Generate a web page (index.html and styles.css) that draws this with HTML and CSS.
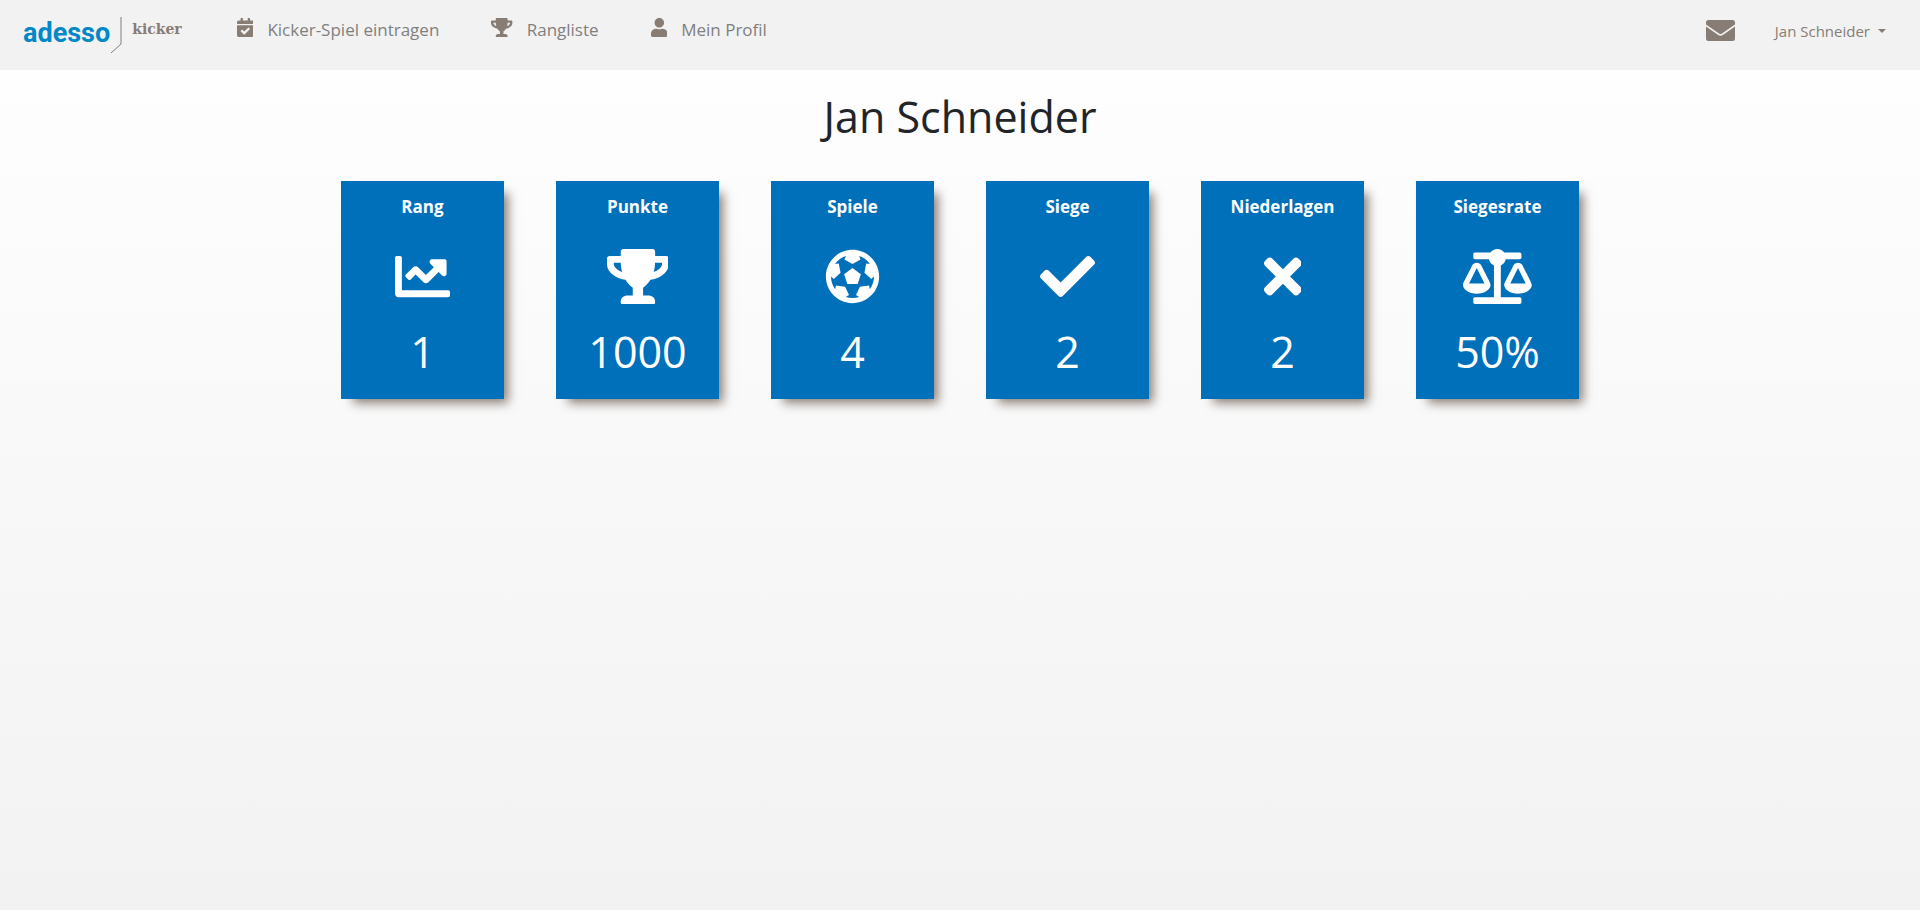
FILE: index.html
```html
<!DOCTYPE html>
<html lang="de">
<head>
<meta charset="utf-8">
<title>adesso kicker – Mein Profil</title>
<link rel="stylesheet" href="styles.css">
</head>
<body>
<header class="navbar">
  <a class="brand" href="#">
    <span class="brand-name">adesso</span>
    <svg class="brand-rule" viewBox="0 0 12 38" aria-hidden="true"><path d="M11 1V28L1 37"/></svg>
    <span class="brand-product">kicker</span>
  </a>
  <nav class="nav-links">
    <a class="nav-link" href="#">
      <svg class="nav-icon" viewBox="0 0 448 512" aria-hidden="true"><path d="M436 160H12c-6.627 0-12-5.373-12-12v-36c0-26.51 21.49-48 48-48h48V12c0-6.627 5.373-12 12-12h40c6.627 0 12 5.373 12 12v52h128V12c0-6.627 5.373-12 12-12h40c6.627 0 12 5.373 12 12v52h48c26.51 0 48 21.49 48 48v36c0 6.627-5.373 12-12 12zM12 192h424c6.627 0 12 5.373 12 12v260c0 26.51-21.49 48-48 48H48c-26.51 0-48-21.49-48-48V204c0-6.627 5.373-12 12-12zm333.296 95.947l-28.169-28.398c-4.667-4.705-12.265-4.736-16.97-.068L194.12 364.665l-45.98-46.352c-4.667-4.705-12.266-4.736-16.971-.068l-28.397 28.17c-4.705 4.667-4.736 12.265-.068 16.97l82.601 83.269c4.667 4.705 12.265 4.736 16.97.068l142.953-141.805c4.705-4.667 4.736-12.265.068-16.97z"/></svg>
      <span>Kicker-Spiel eintragen</span>
    </a>
    <a class="nav-link" href="#">
      <svg class="nav-icon" viewBox="0 0 576 512" aria-hidden="true"><path d="M552 64H448V24c0-13.3-10.7-24-24-24H152c-13.3 0-24 10.7-24 24v40H24C10.7 64 0 74.7 0 88v56c0 35.7 22.5 72.4 61.9 100.7 31.5 22.7 69.8 37.1 110 41.7C203.3 338.5 240 360 240 360v72h-48c-35.3 0-64 20.7-64 56v12c0 6.6 5.4 12 12 12h296c6.6 0 12-5.4 12-12v-12c0-35.3-28.7-56-64-56h-48v-72s36.7-21.5 68.1-73.6c40.3-4.6 78.6-19 110-41.7 39.3-28.3 61.9-65 61.9-100.7V88c0-13.3-10.7-24-24-24zM99.3 192.8C74.9 175.2 64 155.6 64 144v-16h64.2c1 32.6 5.8 61.2 12.8 86.2-15.1-5.2-29.2-12.4-41.7-21.4zM512 144c0 16.1-17.7 36.1-35.3 48.8-12.5 9-26.7 16.2-41.8 21.4 7-25 11.8-53.6 12.8-86.2H512v16z"/></svg>
      <span>Rangliste</span>
    </a>
    <a class="nav-link" href="#">
      <svg class="nav-icon" viewBox="0 0 448 512" aria-hidden="true"><path d="M224 256c70.7 0 128-57.3 128-128S294.7 0 224 0 96 57.3 96 128s57.3 128 128 128zm89.6 32h-16.7c-22.2 10.2-46.9 16-72.9 16s-50.6-5.8-72.9-16h-16.7C60.2 288 0 348.2 0 422.4V464c0 26.5 21.5 48 48 48h352c26.5 0 48-21.5 48-48v-41.6c0-74.2-60.2-134.4-134.4-134.4z"/></svg>
      <span>Mein Profil</span>
    </a>
  </nav>
  <div class="nav-account">
    <button class="mail-button" type="button" aria-label="Nachrichten">
      <svg class="mail-icon" viewBox="0 0 29 21" aria-hidden="true"><path d="M2.5 0h24A2.5 2.5 0 0 1 29 2.5V4.5L16 13.6Q14.5 14.6 13 13.6L0 4.5V2.5A2.5 2.5 0 0 1 2.5 0zM0 6.4L12.2 15Q14.5 16.6 16.8 15L29 6.4V18.5A2.5 2.5 0 0 1 26.5 21h-24A2.5 2.5 0 0 1 0 18.5z"/></svg>
    </button>
    <button class="user-button" type="button">Jan Schneider<span class="caret"></span></button>
  </div>
</header>
<main class="profile">
  <h1 class="profile-name">Jan Schneider</h1>
  <div class="stats">
    <section class="stat-card">
      <h2 class="stat-title">Rang</h2>
      <svg class="stat-icon" viewBox="0 0 512 512" aria-hidden="true"><path d="M496 384H64V80c0-8.84-7.16-16-16-16H16C7.16 64 0 71.16 0 80v336c0 17.67 14.33 32 32 32h464c8.84 0 16-7.16 16-16v-32c0-8.84-7.16-16-16-16zM464 96H345.94c-21.38 0-32.09 25.85-16.97 40.97l32.4 32.4L288 242.75l-73.37-73.37c-12.5-12.5-32.76-12.5-45.25 0l-68.69 68.69c-6.25 6.25-6.25 16.38 0 22.63l22.62 22.62c6.25 6.25 16.38 6.25 22.63 0L192 237.25l73.37 73.37c12.5 12.5 32.76 12.5 45.25 0l96-96 32.4 32.4c15.12 15.12 40.97 4.41 40.97-16.97V112c.01-8.84-7.15-16-15.99-16z"/></svg>
      <p class="stat-value">1</p>
    </section>
    <section class="stat-card">
      <h2 class="stat-title">Punkte</h2>
      <svg class="stat-icon" viewBox="0 0 576 512" aria-hidden="true"><path d="M552 64H448V24c0-13.3-10.7-24-24-24H152c-13.3 0-24 10.7-24 24v40H24C10.7 64 0 74.7 0 88v56c0 35.7 22.5 72.4 61.9 100.7 31.5 22.7 69.8 37.1 110 41.7C203.3 338.5 240 360 240 360v72h-48c-35.3 0-64 20.7-64 56v12c0 6.6 5.4 12 12 12h296c6.6 0 12-5.4 12-12v-12c0-35.3-28.7-56-64-56h-48v-72s36.7-21.5 68.1-73.6c40.3-4.6 78.6-19 110-41.7 39.3-28.3 61.9-65 61.9-100.7V88c0-13.3-10.7-24-24-24zM99.3 192.8C74.9 175.2 64 155.6 64 144v-16h64.2c1 32.6 5.8 61.2 12.8 86.2-15.1-5.2-29.2-12.4-41.7-21.4zM512 144c0 16.1-17.7 36.1-35.3 48.8-12.5 9-26.7 16.2-41.8 21.4 7-25 11.8-53.6 12.8-86.2H512v16z"/></svg>
      <p class="stat-value">1000</p>
    </section>
    <section class="stat-card">
      <h2 class="stat-title">Spiele</h2>
      <svg class="stat-icon" viewBox="0 0 512 512" aria-hidden="true"><path d="M504 256c0 136.967-111.033 248-248 248S8 392.967 8 256 119.033 8 256 8s248 111.033 248 248zm-48 0l-.003-.282-26.064 22.741-62.679-58.5 16.454-84.355 34.303 3.072c-24.889-34.216-60.004-60.089-100.709-73.141l13.651 31.939L256 139l-74.953-41.525 13.651-31.939c-40.631 13.028-75.78 38.87-100.709 73.141l34.565-3.073 16.192 84.355-62.678 58.5-26.064-22.741-.003.282c0 43.015 13.497 83.952 38.472 117.991l7.704-33.897 85.138 10.447 36.301 77.826-29.902 17.786c40.202 13.122 84.29 13.148 124.572 0l-29.902-17.786 36.301-77.826 85.138-10.447 7.704 33.897C442.503 339.952 456 299.015 456 256zm-248.102 69.571l-29.894-91.312L256 177.732l77.996 56.527-29.622 91.312h-96.476z"/></svg>
      <p class="stat-value">4</p>
    </section>
    <section class="stat-card">
      <h2 class="stat-title">Siege</h2>
      <svg class="stat-icon" viewBox="0 0 512 512" aria-hidden="true"><path d="M173.898 439.404l-166.4-166.4c-9.997-9.997-9.997-26.206 0-36.204l36.203-36.204c9.997-9.998 26.207-9.998 36.204 0L192 312.69 432.095 72.596c9.997-9.997 26.207-9.997 36.204 0l36.203 36.204c9.997 9.997 9.997 26.206 0 36.204l-294.4 294.401c-9.998 9.997-26.207 9.997-36.204-.001z"/></svg>
      <p class="stat-value">2</p>
    </section>
    <section class="stat-card">
      <h2 class="stat-title">Niederlagen</h2>
      <svg class="stat-icon" viewBox="0 0 352 512" aria-hidden="true"><path d="M242.72 256l100.07-100.07c12.28-12.28 12.28-32.19 0-44.48l-22.24-22.24c-12.28-12.28-32.19-12.28-44.48 0L176 189.28 75.93 89.21c-12.28-12.28-32.19-12.28-44.48 0L9.21 111.45c-12.28 12.28-12.28 32.19 0 44.48L109.28 256 9.21 356.07c-12.28 12.28-12.28 32.19 0 44.48l22.24 22.24c12.28 12.28 32.2 12.28 44.48 0L176 322.72l100.07 100.07c12.28 12.28 32.2 12.28 44.48 0l22.24-22.24c12.28-12.28 12.28-32.19 0-44.48L242.72 256z"/></svg>
      <p class="stat-value">2</p>
    </section>
    <section class="stat-card">
      <h2 class="stat-title">Siegesrate</h2>
      <svg class="stat-icon" viewBox="0 0 640 512" aria-hidden="true"><path d="M256 336h-.02c0-16.18 1.34-8.73-85.05-181.51-17.65-35.29-68.19-35.36-85.87 0C-2.06 328.75.02 320.33.02 336H0c0 44.18 57.31 80 128 80s128-35.82 128-80zM128 176l72 144H56l72-144zm511.98 160c0-16.18 1.34-8.73-85.05-181.51-17.65-35.29-68.19-35.36-85.87 0-87.12 174.26-85.04 165.84-85.04 181.51H384c0 44.18 57.31 80 128 80s128-35.82 128-80h-.02zM440 320l72-144 72 144H440zm88 128H352V153.25c23.51-10.29 41.16-31.48 46.39-57.25H528c8.84 0 16-7.16 16-16V48c0-8.84-7.16-16-16-16H383.64C369.04 12.68 346.09 0 320 0s-49.04 12.68-63.64 32H112c-8.84 0-16 7.16-16 16v32c0 8.84 7.16 16 16 16h129.61c5.23 25.76 22.87 46.96 46.39 57.25V448H112c-8.84 0-16 7.16-16 16v32c0 8.84 7.16 16 16 16h416c8.84 0 16-7.16 16-16v-32c0-8.84-7.16-16-16-16z"/></svg>
      <p class="stat-value">50%</p>
    </section>
  </div>
</main>
</body>
</html>
```
FILE: styles.css
```css
* {
  box-sizing: border-box;
}

html {
  min-height: 100%;
  background: linear-gradient(#ffffff, #f2f2f2);
}

body {
  margin: 0;
  font-family: "Segoe UI", "Open Sans", "Noto Sans", sans-serif;
  color: #212529;
}

h1, h2, p {
  margin: 0;
}

a {
  color: inherit;
  text-decoration: none;
}

button {
  padding: 0;
  border: 0;
  background: none;
  color: inherit;
  font: inherit;
  cursor: pointer;
}

svg {
  display: block;
  fill: currentColor;
}

.navbar {
  display: flex;
  align-items: flex-start;
  min-height: 70px;
  padding: 16px 34px 0 23px;
  background: #f2f2f2;
  color: #887d75;
}

.brand {
  display: flex;
  align-items: flex-start;
}

.brand-name {
  color: #0088c8;
  font: bold 27px/34px Roboto, sans-serif;
}

.brand-rule {
  width: 12px;
  height: 38px;
  fill: none;
  stroke: #887d75;
}

.brand-product {
  margin-left: 10px;
  font: bold 14px/26px "DejaVu Serif", serif;
}

.nav-links {
  display: flex;
  gap: 52px;
  margin-left: 55px;
}

.nav-link {
  display: flex;
  gap: 14px;
  color: #808080;
  font-size: 17px;
  line-height: 28px;
}

.nav-icon {
  height: 19px;
  margin-top: 2px;
  color: #887d75;
}

.nav-account {
  display: flex;
  gap: 40px;
  margin-left: auto;
}

.mail-icon {
  width: 29px;
  height: 21px;
}

.mail-button {
  height: 29px;
}

.user-button {
  display: flex;
  align-items: center;
  gap: 8px;
  font-size: 15px;
  line-height: 30px;
}

.caret {
  border: 4px solid transparent;
  border-top-color: currentColor;
  border-bottom: 0;
}

.profile {
  padding: 16px 24px;
}

.profile-name {
  font-size: 43px;
  font-weight: 400;
  line-height: 62px;
  text-align: center;
}

.stats {
  display: grid;
  grid-template-columns: repeat(6, 1fr);
  gap: 52px;
  max-width: 1238px;
  margin: 33px auto 0;
}

.stat-card {
  display: flex;
  flex-direction: column;
  align-items: center;
  padding: 12px 8px 15px;
  background: #0070ba;
  color: #ffffff;
  box-shadow: 8px 8px 10px -4px #887d75;
}

.stat-title {
  font-size: 17px;
  font-weight: 700;
  line-height: 28px;
}

.stat-icon {
  height: 55px;
  margin-top: 28px;
}

.stat-value {
  margin-top: 16px;
  font-size: 43px;
  font-weight: 400;
  line-height: 64px;
}
```
